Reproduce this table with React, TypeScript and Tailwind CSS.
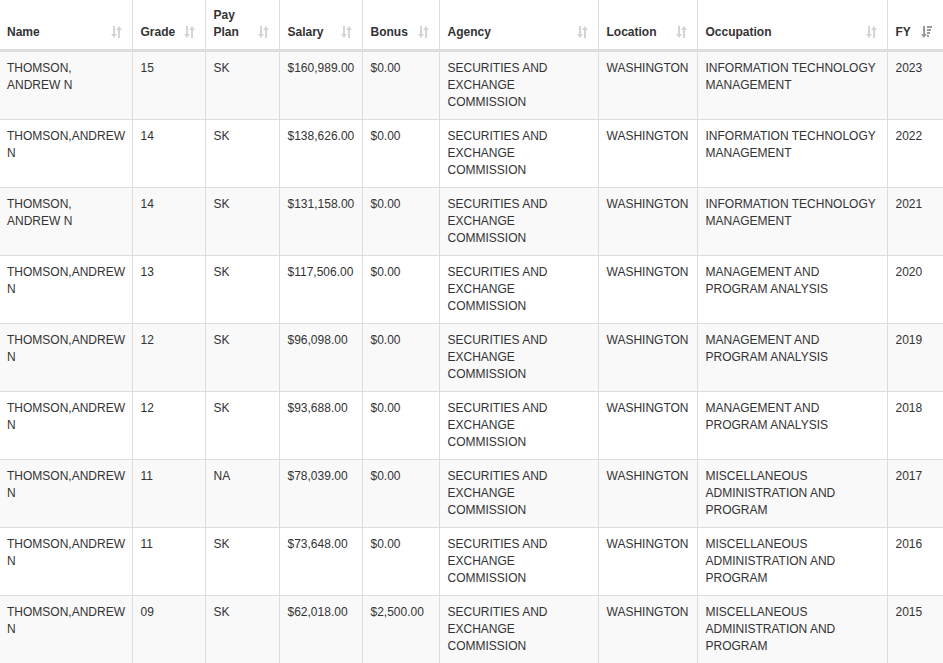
import React from "react";

type Row = {
  name: string;
  grade: string;
  plan: string;
  salary: string;
  bonus: string;
  agency: string;
  location: string;
  occupation: string;
  fy: string;
};

const rows: Row[] = [
  { name: "THOMSON, ANDREW N", grade: "15", plan: "SK", salary: "$160,989.00", bonus: "$0.00", agency: "SECURITIES AND EXCHANGE COMMISSION", location: "WASHINGTON", occupation: "INFORMATION TECHNOLOGY MANAGEMENT", fy: "2023" },
  { name: "THOMSON,ANDREW N", grade: "14", plan: "SK", salary: "$138,626.00", bonus: "$0.00", agency: "SECURITIES AND EXCHANGE COMMISSION", location: "WASHINGTON", occupation: "INFORMATION TECHNOLOGY MANAGEMENT", fy: "2022" },
  { name: "THOMSON, ANDREW N", grade: "14", plan: "SK", salary: "$131,158.00", bonus: "$0.00", agency: "SECURITIES AND EXCHANGE COMMISSION", location: "WASHINGTON", occupation: "INFORMATION TECHNOLOGY MANAGEMENT", fy: "2021" },
  { name: "THOMSON,ANDREW N", grade: "13", plan: "SK", salary: "$117,506.00", bonus: "$0.00", agency: "SECURITIES AND EXCHANGE COMMISSION", location: "WASHINGTON", occupation: "MANAGEMENT AND PROGRAM ANALYSIS", fy: "2020" },
  { name: "THOMSON,ANDREW N", grade: "12", plan: "SK", salary: "$96,098.00", bonus: "$0.00", agency: "SECURITIES AND EXCHANGE COMMISSION", location: "WASHINGTON", occupation: "MANAGEMENT AND PROGRAM ANALYSIS", fy: "2019" },
  { name: "THOMSON,ANDREW N", grade: "12", plan: "SK", salary: "$93,688.00", bonus: "$0.00", agency: "SECURITIES AND EXCHANGE COMMISSION", location: "WASHINGTON", occupation: "MANAGEMENT AND PROGRAM ANALYSIS", fy: "2018" },
  { name: "THOMSON,ANDREW N", grade: "11", plan: "NA", salary: "$78,039.00", bonus: "$0.00", agency: "SECURITIES AND EXCHANGE COMMISSION", location: "WASHINGTON", occupation: "MISCELLANEOUS ADMINISTRATION AND PROGRAM", fy: "2017" },
  { name: "THOMSON,ANDREW N", grade: "11", plan: "SK", salary: "$73,648.00", bonus: "$0.00", agency: "SECURITIES AND EXCHANGE COMMISSION", location: "WASHINGTON", occupation: "MISCELLANEOUS ADMINISTRATION AND PROGRAM", fy: "2016" },
  { name: "THOMSON,ANDREW N", grade: "09", plan: "SK", salary: "$62,018.00", bonus: "$2,500.00", agency: "SECURITIES AND EXCHANGE COMMISSION", location: "WASHINGTON", occupation: "MISCELLANEOUS ADMINISTRATION AND PROGRAM", fy: "2015" },
];

function SortBoth() {
  return (
    <svg width="11" height="12" viewBox="0 0 11 12" className="absolute right-[10px] bottom-[11px]">
      <g fill="#d4d4d4">
        <rect x="2" y="0" width="2" height="9" />
        <polygon points="0,8 6,8 3,12" />
        <rect x="7" y="3" width="2" height="9" />
        <polygon points="5,4 11,4 8,0" />
      </g>
    </svg>
  );
}

function SortDesc() {
  return (
    <svg width="11" height="12" viewBox="0 0 11 12" className="absolute right-[11px] bottom-[11px]">
      <g fill="#9a9a9a">
        <rect x="2" y="0" width="2" height="9" />
        <polygon points="0,8 6,8 3,12" />
        <rect x="6" y="0" width="5" height="2" />
        <rect x="6" y="3" width="4" height="2" />
        <rect x="6" y="6" width="3" height="2" />
        <rect x="6" y="9" width="2" height="2" />
      </g>
    </svg>
  );
}

const cols: { label: React.ReactNode; w: string; key: keyof Row }[] = [
  { label: "Name", w: "w-[132px]", key: "name" },
  { label: "Grade", w: "w-[73px]", key: "grade" },
  { label: <>Pay<br />Plan</>, w: "w-[74px]", key: "plan" },
  { label: "Salary", w: "w-[83px]", key: "salary" },
  { label: "Bonus", w: "w-[77px]", key: "bonus" },
  { label: "Agency", w: "w-[159px]", key: "agency" },
  { label: "Location", w: "w-[99px]", key: "location" },
  { label: "Occupation", w: "w-[190px]", key: "occupation" },
  { label: "FY", w: "w-[56px]", key: "fy" },
];

export default function App() {
  return (
    <div className="w-[943px] h-[663px] overflow-hidden bg-white" style={{ fontFamily: '"Liberation Sans", Arial, sans-serif' }}>
      <table className="table-fixed border-collapse w-[943px] text-[12px] leading-[17px] text-[#333]">
        <colgroup>
          {cols.map((c, i) => (
            <col key={i} className={c.w} />
          ))}
        </colgroup>
        <thead>
          <tr>
            {cols.map((c, i) => (
              <th
                key={i}
                className={`relative h-[50px] align-bottom text-left font-bold ${i === 0 ? "pl-[7px]" : "pl-[8px]"} pr-[24px] pb-[8px] pt-0 border-b-[3px] border-b-[#dddddd] ${i < cols.length - 1 ? "border-r border-r-[#dddddd]" : ""}`}
              >
                {c.label}
                {i === cols.length - 1 ? <SortDesc /> : <SortBoth />}
              </th>
            ))}
          </tr>
        </thead>
        <tbody>
          {rows.map((r, ri) => (
            <tr key={ri} className={ri % 2 === 0 ? "bg-[#f9f9f9]" : "bg-white"}>
              {cols.map((c, ci) => (
                <td
                  key={ci}
                  className={`align-top ${ci === 0 ? "pl-[7px] pr-[8px] py-[8px]" : "p-[8px]"} border-b border-b-[#dddddd] ${ci < cols.length - 1 ? "border-r border-r-[#dddddd]" : ""}`}
                >
                  {r[c.key]}
                </td>
              ))}
            </tr>
          ))}
        </tbody>
      </table>
    </div>
  );
}
